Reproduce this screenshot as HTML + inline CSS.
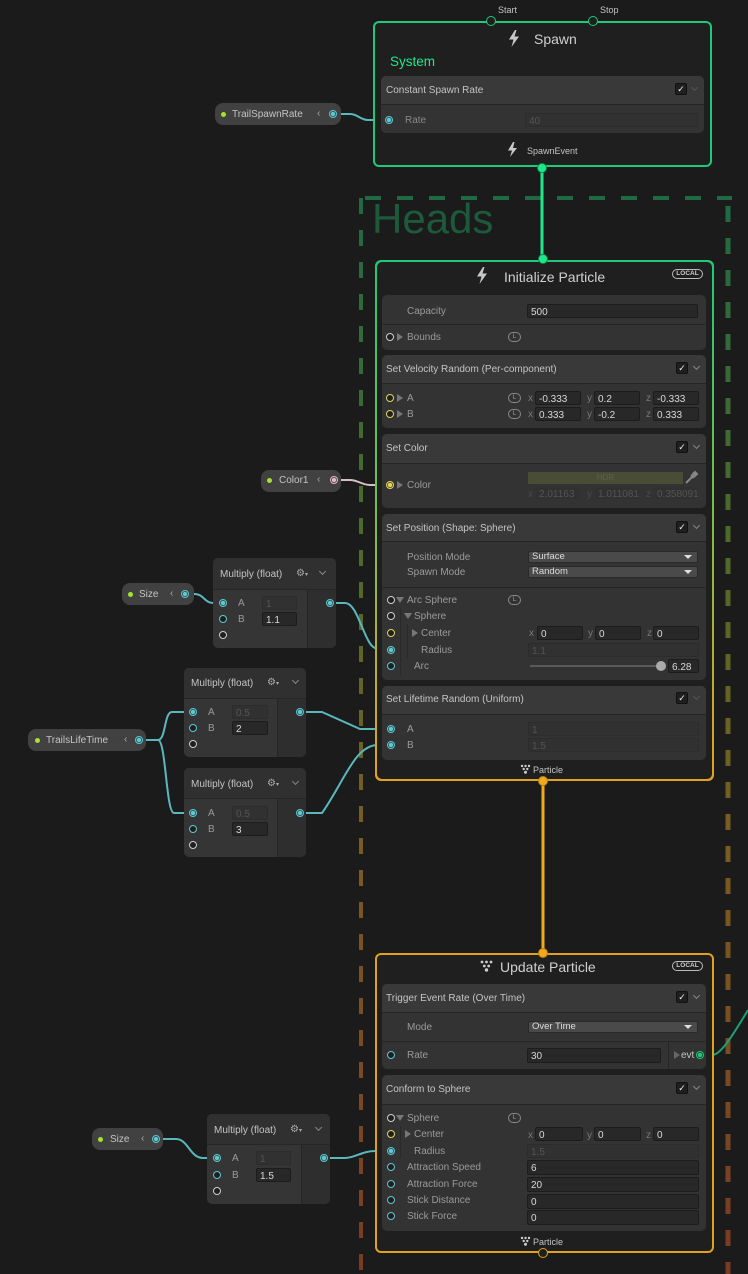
<!DOCTYPE html>
<html><head><meta charset="utf-8"><style>
*{box-sizing:border-box;margin:0;padding:0}
body{width:748px;height:1274px;background:#1b1b1b;position:relative;overflow:hidden;font-family:"Liberation Sans",sans-serif;font-size:10px;color:#c4c4c4}
.a{position:absolute}
.t{position:absolute;white-space:nowrap;line-height:12px;font-size:10px;color:#c4c4c4;padding-top:1px}
.g{color:#9a9a9a}
.blk{position:absolute;background:#333;border-radius:5px;overflow:hidden}
.hd{position:absolute;left:0;right:0;top:0;background:#393939;border-bottom:1px solid #262626}
.f{position:absolute;height:14px;background:#282828;border:1px solid #1c1c1c;border-radius:2px;color:#d8d8d8;font-size:10px;line-height:13px;padding-left:3px;padding-top:1px;white-space:nowrap;overflow:hidden}
.fd{background:#313131;border-color:#2c2c2c;color:#545454}
.dd{position:absolute;height:12px;background:#4a4a4a;border:1px solid #2a2a2a;border-radius:2px;color:#dcdcdc;font-size:9.5px;line-height:10px;padding-left:3px}
.dd:after{content:"";position:absolute;right:5px;top:3px;border-left:4px solid transparent;border-right:4px solid transparent;border-top:4px solid #ddd}
.p{position:absolute;width:8px;height:8px;border-radius:50%;border:1.5px solid #5fc8d0;margin:-4px 0 0 -4px;background:#1f1f1f}
.pf{background:radial-gradient(circle,#5fc8d0 0 2px,#2a3a3c 2.5px)}
.pw{border-color:#cfcfcf}
.py{border-color:#e2d65a}
.chk{position:absolute;width:12px;height:12px;background:#1f1f1f;border:1px solid #111;border-radius:2px;color:#eee;font-size:9px;line-height:10px;text-align:center}
.chv{position:absolute;width:5px;height:5px;border-right:1px solid #888;border-bottom:1px solid #888;transform:rotate(45deg)}
.lb{position:absolute;width:13px;height:10px;border:1px solid #888;border-radius:5px;font-size:6.5px;line-height:8px;text-align:center;color:#999}
.pill{position:absolute;height:22px;background:#414141;border-radius:8px}
.dot{position:absolute;width:5px;height:5px;border-radius:50%;background:#a6e22a;margin:-2.5px 0 0 -2.5px}
.mn{position:absolute;background:#353535;border-radius:5px;overflow:hidden}
.mh{position:absolute;left:0;right:0;top:0;background:#303030;border-bottom:1px solid #262626}
.mr{position:absolute;bottom:0;right:0;background:#2e2e2e;border-left:1px solid #262626}
.tri{position:absolute;width:0;height:0;border-top:4px solid transparent;border-bottom:4px solid transparent;border-left:6px solid #777}
.trd{position:absolute;width:0;height:0;border-left:4px solid transparent;border-right:4px solid transparent;border-top:6px solid #777}
.sep{position:absolute;height:1px;background:#262626}
</style></head><body>

<svg class="a" style="left:0;top:0" width="748" height="1274">
<defs>
<linearGradient id="dg" x1="0" y1="198" x2="0" y2="1274" gradientUnits="userSpaceOnUse">
<stop offset="0" stop-color="#1f6a44"/><stop offset="0.33" stop-color="#506a28"/><stop offset="0.6" stop-color="#7a5c20"/><stop offset="1" stop-color="#7a3a22"/>
</linearGradient>
</defs>
<line x1="365" y1="198" x2="732" y2="198" stroke="#1f6a44" stroke-width="4" stroke-dasharray="16 16"/>
<line x1="361" y1="198" x2="361" y2="1274" stroke="url(#dg)" stroke-width="4" stroke-dasharray="16 16"/>
<line x1="728" y1="206" x2="728" y2="1274" stroke="url(#dg)" stroke-width="5" stroke-dasharray="16 16"/>
<g fill="none" stroke="#5ab8bd" stroke-width="2">
<path d="M333 114 L350 114 C358 114 360 120 368 120 L388 120"/>
<path d="M185 594 L195 594 C203 594 205 603 213 603 L223 603"/>
<path d="M330 603 L345 603 C355 603 360 625 368 640 C372 648 375 650 390 650"/>
<path d="M139 740 L158 740 C166 740 164 712 172 712 L193 712"/>
<path d="M139 740 L158 740 C166 740 166 813 174 813 L193 813"/>
<path d="M300 712 L322 712 L360 729 L390 729"/>
<path d="M300 813 L322 813 C345 780 355 745 378 745 L390 745"/>
<path d="M156 1139 L176 1139 C188 1139 190 1158 203 1158 L217 1158"/>
<path d="M324 1158 L345 1158 C355 1158 362 1151 375 1151 L390 1151"/>
</g>
<path d="M334 480 L350 480 C358 480 362 485 370 485 L390 485" fill="none" stroke="#d8c0c0" stroke-width="2"/>
<path d="M700 1055 L712 1055 C720 1055 730 1040 748 1010" fill="none" stroke="#1ca070" stroke-width="2"/>
<line x1="542" y1="168" x2="542" y2="259" stroke="#1ee88a" stroke-width="3"/>
<line x1="543" y1="782" x2="543" y2="953" stroke="#f0a81c" stroke-width="3"/>
</svg>

<div class="a" style="top:198px;left:372px;font-size:42px;line-height:42px;color:#1d5a3c">Heads</div>

<!-- Spawn -->
<div class="a" style="left:373px;top:21px;width:339px;height:146px;border:2px solid #1ec97a;border-radius:6px;background:#1f1f1f"></div>
<div class="a" style="left:486px;top:16px;width:10px;height:10px;border-radius:50%;border:1.5px solid #1ec97a;background:#1f1f1f"></div>
<div class="a" style="left:588px;top:16px;width:10px;height:10px;border-radius:50%;border:1.5px solid #1ec97a;background:#1f1f1f"></div>
<div class="t" style="left:498px;top:3px;font-size:9px">Start</div>
<div class="t" style="left:600px;top:3px;font-size:9px">Stop</div>
<svg class="a" style="left:509px;top:30px" width="11" height="17"><path d="M6 0 L0 9.5 L4.5 9.5 L2.5 17 L10 6.5 L5.5 6.5 L7.5 0 Z" fill="#c8c8c8"/></svg>
<div class="t" style="left:534px;top:29px;font-size:14px;line-height:18px;color:#d0d0d0">Spawn</div>
<div class="t" style="left:390px;top:52px;font-size:13.5px;line-height:17px;color:#1ee88a">System</div>
<div class="blk" style="left:381px;top:76px;width:323px;height:57px"><div class="hd" style="height:29px"></div></div>
<div class="t" style="left:386px;top:84px">Constant Spawn Rate</div>
<div class="chk" style="left:675px;top:83px">✓</div>
<div class="chv" style="left:692px;top:85px;border-color:#555"></div>
<div class="p pf" style="left:389px;top:120px"></div>
<div class="t g" style="left:405px;top:114px;color:#888">Rate</div>
<div class="f fd" style="left:525px;top:113px;width:173px">40</div>
<svg class="a" style="left:508px;top:142px" width="9" height="15"><path d="M5 0 L0 8.5 L4 8.5 L2 15 L9 6 L5 6 L6.5 0 Z" fill="#c8c8c8"/></svg>
<div class="t" style="left:527px;top:144px;font-size:9px">SpawnEvent</div>
<div class="a" style="left:537px;top:163px;width:10px;height:10px;border-radius:50%;background:#1ee88a;border:1.5px solid #0f8a50"></div>

<!-- Initialize -->
<div class="a" style="left:375px;top:260px;width:339px;height:521px;border-radius:6px;background:linear-gradient(#20c878,#7dbd48 50%,#e3a21c)"></div>
<div class="a" style="left:377px;top:262px;width:335px;height:517px;border-radius:5px;background:#1f1f1f"></div>
<div class="a" style="left:538px;top:254px;width:10px;height:10px;border-radius:50%;background:#1ee88a;border:1.5px solid #0f8a50"></div>
<svg class="a" style="left:477px;top:267px" width="11" height="17"><path d="M6 0 L0 9.5 L4.5 9.5 L2.5 17 L10 6.5 L5.5 6.5 L7.5 0 Z" fill="#c8c8c8"/></svg>
<div class="t" style="left:504px;top:267px;font-size:14px;line-height:18px;color:#d0d0d0">Initialize Particle</div>
<div class="a" style="left:672px;top:269px;width:31px;height:10px;border:1px solid #bbb;border-radius:5px;font-size:6.5px;line-height:8px;text-align:center;color:#ccc;font-weight:bold">LOCAL</div>

<div class="blk" style="left:382px;top:295px;width:324px;height:55px"><div class="sep" style="left:0;right:0;top:29px"></div></div>
<div class="t g" style="left:407px;top:305px">Capacity</div>
<div class="f" style="left:527px;top:304px;width:171px">500</div>
<div class="p pw" style="left:390px;top:337px"></div>
<div class="tri" style="left:397px;top:333px"></div>
<div class="t g" style="left:407px;top:331px">Bounds</div>
<div class="lb" style="left:508px;top:332px">L</div>

<div class="blk" style="left:382px;top:355px;width:324px;height:73px"><div class="hd" style="height:29px"></div></div>
<div class="t" style="left:386px;top:363px">Set Velocity Random (Per-component)</div>
<div class="chk" style="left:676px;top:362px">✓</div><div class="chv" style="left:694px;top:364px"></div>
<div class="p py" style="left:390px;top:398px"></div><div class="tri" style="left:397px;top:394px"></div><div class="t g" style="left:407px;top:392px">A</div>
<div class="p py" style="left:390px;top:414px"></div><div class="tri" style="left:397px;top:410px"></div><div class="t g" style="left:407px;top:408px">B</div>
<div class="lb" style="left:508px;top:393px">L</div><div class="lb" style="left:508px;top:409px">L</div>
<div class="t" style="left:528px;top:392px;color:#777">x</div><div class="f" style="left:535px;top:391px;width:46px">-0.333</div>
<div class="t" style="left:587px;top:392px;color:#777">y</div><div class="f" style="left:594px;top:391px;width:46px">0.2</div>
<div class="t" style="left:646px;top:392px;color:#777">z</div><div class="f" style="left:653px;top:391px;width:46px">-0.333</div>
<div class="t" style="left:528px;top:408px;color:#777">x</div><div class="f" style="left:535px;top:407px;width:46px">0.333</div>
<div class="t" style="left:587px;top:408px;color:#777">y</div><div class="f" style="left:594px;top:407px;width:46px">-0.2</div>
<div class="t" style="left:646px;top:408px;color:#777">z</div><div class="f" style="left:653px;top:407px;width:46px">0.333</div>

<div class="blk" style="left:382px;top:434px;width:324px;height:74px"><div class="hd" style="height:30px"></div></div>
<div class="t" style="left:386px;top:442px">Set Color</div>
<div class="chk" style="left:676px;top:441px">✓</div><div class="chv" style="left:694px;top:443px"></div>
<div class="p py" style="left:390px;top:485px;background:radial-gradient(circle,#e2d65a 0 2px,#3a3a20 2.5px)"></div>
<div class="tri" style="left:397px;top:481px"></div><div class="t g" style="left:407px;top:479px">Color</div>
<div class="a" style="left:528px;top:472px;width:155px;height:12px;background:#4a4d36;font-size:8px;line-height:12px;text-align:center;color:#5f6244">HDR</div>
<svg class="a" style="left:684px;top:470px" width="15" height="15"><path d="M2 13 L8 7 M9 4 L11 2 L13 4 L11 6 Z M7 5 L10 8" stroke="#888" stroke-width="2" fill="#888"/></svg>
<div class="t" style="left:528px;top:488px;color:#4a4a4a">x</div><div class="f fd" style="left:535px;top:486px;width:46px;border-color:#333">2.01163</div>
<div class="t" style="left:587px;top:488px;color:#4a4a4a">y</div><div class="f fd" style="left:594px;top:486px;width:46px;border-color:#333">1.011081</div>
<div class="t" style="left:646px;top:488px;color:#4a4a4a">z</div><div class="f fd" style="left:653px;top:486px;width:46px;border-color:#333">0.358091</div>

<div class="blk" style="left:382px;top:514px;width:324px;height:166px"><div class="hd" style="height:28px"></div><div class="sep" style="left:0;right:0;top:73px"></div></div>
<div class="t" style="left:386px;top:522px">Set Position (Shape: Sphere)</div>
<div class="chk" style="left:676px;top:521px">✓</div><div class="chv" style="left:694px;top:523px"></div>
<div class="t g" style="left:407px;top:551px">Position Mode</div><div class="dd" style="left:528px;top:551px;width:170px">Surface</div>
<div class="t g" style="left:407px;top:566px">Spawn Mode</div><div class="dd" style="left:528px;top:566px;width:170px">Random</div>
<div class="p pw" style="left:391px;top:600px"></div><div class="trd" style="left:396px;top:597px"></div><div class="t g" style="left:407px;top:594px">Arc Sphere</div>
<div class="lb" style="left:508px;top:595px">L</div>
<div class="a" style="left:400px;top:608px;width:1px;height:68px;background:#2a2a2a"></div>
<div class="p pw" style="left:391px;top:616px"></div><div class="trd" style="left:404px;top:613px"></div><div class="t g" style="left:414px;top:610px">Sphere</div>
<div class="a" style="left:407px;top:624px;width:1px;height:34px;background:#2a2a2a"></div>
<div class="p py" style="left:391px;top:633px"></div><div class="tri" style="left:412px;top:629px"></div><div class="t g" style="left:421px;top:627px">Center</div>
<div class="t" style="left:529px;top:627px;color:#777">x</div><div class="f" style="left:537px;top:626px;width:46px">0</div>
<div class="t" style="left:588px;top:627px;color:#777">y</div><div class="f" style="left:595px;top:626px;width:46px">0</div>
<div class="t" style="left:647px;top:627px;color:#777">z</div><div class="f" style="left:653px;top:626px;width:46px">0</div>
<div class="p pf" style="left:391px;top:650px"></div><div class="t g" style="left:421px;top:644px">Radius</div>
<div class="f fd" style="left:528px;top:643px;width:171px">1.1</div>
<div class="p" style="left:391px;top:666px"></div><div class="t g" style="left:414px;top:660px">Arc</div>
<div class="a" style="left:530px;top:665px;width:130px;height:2px;background:#5a5a5a"></div>
<div class="a" style="left:656px;top:661px;width:10px;height:10px;border-radius:50%;background:#aaa"></div>
<div class="f" style="left:668px;top:659px;width:31px">6.28</div>

<div class="blk" style="left:382px;top:686px;width:324px;height:74px"><div class="hd" style="height:29px"></div></div>
<div class="t" style="left:386px;top:693px">Set Lifetime Random (Uniform)</div>
<div class="chk" style="left:676px;top:692px">✓</div><div class="chv" style="left:694px;top:694px;border-color:#555"></div>
<div class="p pf" style="left:391px;top:729px"></div><div class="t g" style="left:407px;top:723px">A</div><div class="f fd" style="left:528px;top:722px;width:171px">1</div>
<div class="p pf" style="left:391px;top:745px"></div><div class="t g" style="left:407px;top:739px">B</div><div class="f fd" style="left:528px;top:738px;width:171px">1.5</div>
<svg class="a" style="left:520px;top:764px" width="11" height="10"><g fill="#ccc"><circle cx="2" cy="2" r="1.2"/><circle cx="5.5" cy="2" r="1.2"/><circle cx="9" cy="2" r="1.2"/><circle cx="3.7" cy="5" r="1.2"/><circle cx="7.3" cy="5" r="1.2"/><circle cx="5.5" cy="8.3" r="1.5"/></g></svg>
<div class="t" style="left:533px;top:763px;font-size:9px">Particle</div>
<div class="a" style="left:538px;top:776px;width:10px;height:10px;border-radius:50%;background:#f0a81c;border:1.5px solid #c07c10"></div>

<!-- Update -->
<div class="a" style="left:375px;top:953px;width:339px;height:300px;border:2px solid #e0a21c;border-radius:6px;background:#1f1f1f"></div>
<div class="a" style="left:538px;top:948px;width:10px;height:10px;border-radius:50%;background:#f0a81c;border:1.5px solid #c07c10"></div>
<svg class="a" style="left:480px;top:960px" width="13" height="12"><g fill="#ccc"><circle cx="2" cy="2" r="1.4"/><circle cx="6.5" cy="2" r="1.4"/><circle cx="11" cy="2" r="1.4"/><circle cx="4.3" cy="6" r="1.4"/><circle cx="8.7" cy="6" r="1.4"/><circle cx="6.5" cy="10" r="1.7"/></g></svg>
<div class="t" style="left:500px;top:957px;font-size:14px;line-height:18px;color:#d0d0d0">Update Particle</div>
<div class="a" style="left:672px;top:961px;width:31px;height:10px;border:1px solid #bbb;border-radius:5px;font-size:6.5px;line-height:8px;text-align:center;color:#ccc;font-weight:bold">LOCAL</div>

<div class="blk" style="left:382px;top:984px;width:324px;height:85px"><div class="hd" style="height:29px"></div><div class="sep" style="left:0;right:0;top:57px"></div><div class="a" style="left:286px;top:58px;width:1px;height:27px;background:#262626"></div></div>
<div class="t" style="left:386px;top:992px">Trigger Event Rate (Over Time)</div>
<div class="chk" style="left:676px;top:991px">✓</div><div class="chv" style="left:694px;top:993px"></div>
<div class="t g" style="left:407px;top:1021px">Mode</div><div class="dd" style="left:528px;top:1021px;width:170px">Over Time</div>
<div class="p" style="left:391px;top:1055px"></div><div class="t g" style="left:407px;top:1049px">Rate</div>
<div class="f" style="left:527px;top:1048px;width:134px;height:15px">30</div>
<div class="tri" style="left:674px;top:1051px;border-left-color:#666"></div><div class="t" style="left:681px;top:1049px">evt</div>
<div class="p" style="left:700px;top:1055px;border-color:#1ec97a;background:radial-gradient(circle,#1ec97a 0 2px,#1f2a24 2.5px)"></div>

<div class="blk" style="left:382px;top:1075px;width:324px;height:156px"><div class="hd" style="height:30px"></div></div>
<div class="t" style="left:386px;top:1083px">Conform to Sphere</div>
<div class="chk" style="left:676px;top:1082px">✓</div><div class="chv" style="left:694px;top:1084px"></div>
<div class="p pw" style="left:391px;top:1118px"></div><div class="trd" style="left:396px;top:1115px"></div><div class="t g" style="left:407px;top:1112px">Sphere</div>
<div class="lb" style="left:508px;top:1113px">L</div>
<div class="a" style="left:400px;top:1126px;width:1px;height:32px;background:#2a2a2a"></div>
<div class="p py" style="left:391px;top:1134px"></div><div class="tri" style="left:405px;top:1130px"></div><div class="t g" style="left:414px;top:1128px">Center</div>
<div class="t" style="left:528px;top:1129px;color:#777">x</div><div class="f" style="left:535px;top:1127px;width:48px">0</div>
<div class="t" style="left:587px;top:1129px;color:#777">y</div><div class="f" style="left:594px;top:1127px;width:47px">0</div>
<div class="t" style="left:646px;top:1129px;color:#777">z</div><div class="f" style="left:653px;top:1127px;width:46px">0</div>
<div class="p pf" style="left:391px;top:1151px"></div><div class="t g" style="left:414px;top:1145px">Radius</div><div class="f fd" style="left:527px;top:1144px;width:172px">1.5</div>
<div class="p" style="left:391px;top:1167px"></div><div class="t g" style="left:407px;top:1161px">Attraction Speed</div><div class="f" style="left:527px;top:1160px;width:172px;height:15px">6</div>
<div class="p" style="left:391px;top:1184px"></div><div class="t g" style="left:407px;top:1178px">Attraction Force</div><div class="f" style="left:527px;top:1177px;width:172px;height:15px">20</div>
<div class="p" style="left:391px;top:1200px"></div><div class="t g" style="left:407px;top:1194px">Stick Distance</div><div class="f" style="left:527px;top:1194px;width:172px;height:15px">0</div>
<div class="p" style="left:391px;top:1216px"></div><div class="t g" style="left:407px;top:1210px">Stick Force</div><div class="f" style="left:527px;top:1210px;width:172px;height:15px">0</div>
<svg class="a" style="left:520px;top:1236px" width="11" height="10"><g fill="#ccc"><circle cx="2" cy="2" r="1.2"/><circle cx="5.5" cy="2" r="1.2"/><circle cx="9" cy="2" r="1.2"/><circle cx="3.7" cy="5" r="1.2"/><circle cx="7.3" cy="5" r="1.2"/><circle cx="5.5" cy="8.3" r="1.5"/></g></svg>
<div class="t" style="left:533px;top:1235px;font-size:9px">Particle</div>
<div class="a" style="left:538px;top:1248px;width:10px;height:10px;border-radius:50%;background:#1f1f1f;border:1.5px solid #e0a21c"></div>

<!-- Pills -->
<div class="pill" style="left:215px;top:103px;width:126px"></div>
<div class="dot" style="left:223px;top:114px"></div><div class="t" style="left:232px;top:108px">TrailSpawnRate</div>
<div class="t" style="left:317px;top:107px;color:#aaa">‹</div><div class="p pf" style="left:333px;top:114px"></div>

<div class="pill" style="left:261px;top:470px;width:80px"></div>
<div class="dot" style="left:269px;top:480px"></div><div class="t" style="left:279px;top:474px">Color1</div>
<div class="t" style="left:317px;top:473px;color:#aaa">‹</div>
<div class="p" style="left:334px;top:480px;border-color:#e0b8c8;background:radial-gradient(circle,#e0b8c8 0 2px,#3a2a30 2.5px)"></div>

<div class="pill" style="left:122px;top:583px;width:72px"></div>
<div class="dot" style="left:130px;top:594px"></div><div class="t" style="left:139px;top:588px">Size</div>
<div class="t" style="left:170px;top:587px;color:#aaa">‹</div><div class="p pf" style="left:185px;top:594px"></div>

<div class="pill" style="left:28px;top:729px;width:118px"></div>
<div class="dot" style="left:37px;top:740px"></div><div class="t" style="left:46px;top:734px">TrailsLifeTime</div>
<div class="t" style="left:124px;top:733px;color:#aaa">‹</div><div class="p pf" style="left:139px;top:740px"></div>

<div class="pill" style="left:92px;top:1128px;width:71px"></div>
<div class="dot" style="left:100px;top:1139px"></div><div class="t" style="left:110px;top:1133px">Size</div>
<div class="t" style="left:141px;top:1132px;color:#aaa">‹</div><div class="p pf" style="left:156px;top:1139px"></div>

<!-- Multiply nodes -->
<div class="mn" style="left:213px;top:558px;width:123px;height:90px"><div class="mh" style="height:32px"></div><div class="mr" style="top:32px;width:29px"></div></div>
<div class="t" style="left:220px;top:568px">Multiply (float)</div><div class="t" style="left:296px;top:567px;color:#aaa">⚙<span style="font-size:6px">▾</span></div><div class="chv" style="left:320px;top:569px"></div>
<div class="p pf" style="left:223px;top:603px"></div><div class="t g" style="left:238px;top:597px">A</div><div class="f fd" style="left:262px;top:596px;width:35px">1</div>
<div class="p" style="left:223px;top:619px"></div><div class="t g" style="left:238px;top:613px">B</div><div class="f" style="left:262px;top:612px;width:35px">1.1</div>
<div class="p pw" style="left:223px;top:635px"></div><div class="p pf" style="left:330px;top:603px"></div>

<div class="mn" style="left:184px;top:668px;width:122px;height:89px"><div class="mh" style="height:31px"></div><div class="mr" style="top:31px;width:29px"></div></div>
<div class="t" style="left:191px;top:677px">Multiply (float)</div><div class="t" style="left:267px;top:676px;color:#aaa">⚙<span style="font-size:6px">▾</span></div><div class="chv" style="left:293px;top:678px"></div>
<div class="p pf" style="left:193px;top:712px"></div><div class="t g" style="left:208px;top:706px">A</div><div class="f fd" style="left:232px;top:705px;width:36px">0.5</div>
<div class="p" style="left:193px;top:728px"></div><div class="t g" style="left:208px;top:722px">B</div><div class="f" style="left:232px;top:721px;width:36px">2</div>
<div class="p pw" style="left:193px;top:744px"></div><div class="p pf" style="left:300px;top:712px"></div>

<div class="mn" style="left:184px;top:768px;width:122px;height:89px"><div class="mh" style="height:31px"></div><div class="mr" style="top:31px;width:29px"></div></div>
<div class="t" style="left:191px;top:778px">Multiply (float)</div><div class="t" style="left:267px;top:777px;color:#aaa">⚙<span style="font-size:6px">▾</span></div><div class="chv" style="left:293px;top:779px"></div>
<div class="p pf" style="left:193px;top:813px"></div><div class="t g" style="left:208px;top:807px">A</div><div class="f fd" style="left:232px;top:806px;width:36px">0.5</div>
<div class="p" style="left:193px;top:829px"></div><div class="t g" style="left:208px;top:823px">B</div><div class="f" style="left:232px;top:822px;width:36px">3</div>
<div class="p pw" style="left:193px;top:845px"></div><div class="p pf" style="left:300px;top:813px"></div>

<div class="mn" style="left:207px;top:1114px;width:123px;height:90px"><div class="mh" style="height:31px"></div><div class="mr" style="top:31px;width:29px"></div></div>
<div class="t" style="left:214px;top:1124px">Multiply (float)</div><div class="t" style="left:290px;top:1123px;color:#aaa">⚙<span style="font-size:6px">▾</span></div><div class="chv" style="left:316px;top:1125px"></div>
<div class="p pf" style="left:217px;top:1158px"></div><div class="t g" style="left:232px;top:1152px">A</div><div class="f fd" style="left:256px;top:1151px;width:35px">1</div>
<div class="p" style="left:217px;top:1175px"></div><div class="t g" style="left:232px;top:1169px">B</div><div class="f" style="left:256px;top:1168px;width:35px">1.5</div>
<div class="p pw" style="left:217px;top:1191px"></div><div class="p pf" style="left:324px;top:1158px"></div>

</body></html>
